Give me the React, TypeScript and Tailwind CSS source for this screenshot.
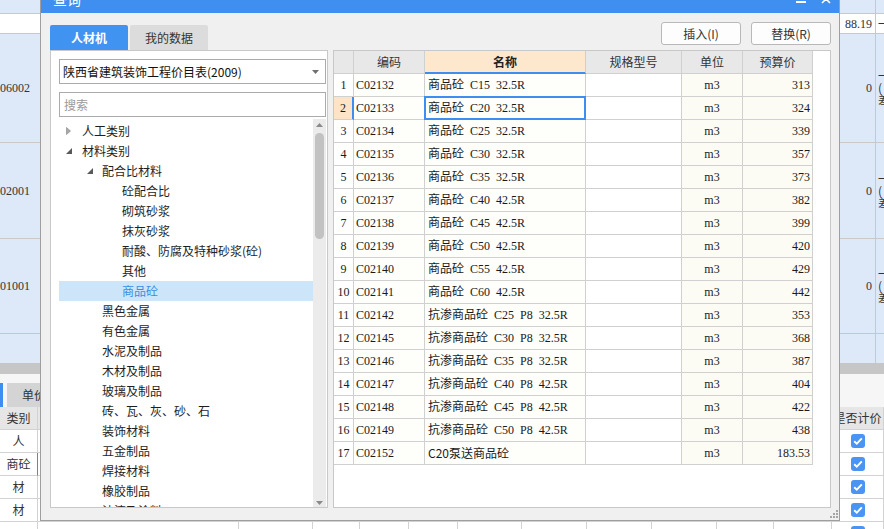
import React from "react";

const SANS = "font-[family-name:'Noto_Sans_CJK_SC','Noto_Sans',sans-serif]";
const SERIF = "font-[family-name:'Liberation_Serif','Noto_Sans_CJK_SC',serif]";

type Row = { n: number; code: string; name: string; price: string; sans?: boolean };

const rows: Row[] = [
  { n: 1, code: "C02132", name: "商品砼 C15 32.5R", price: "313" },
  { n: 2, code: "C02133", name: "商品砼 C20 32.5R", price: "324" },
  { n: 3, code: "C02134", name: "商品砼 C25 32.5R", price: "339" },
  { n: 4, code: "C02135", name: "商品砼 C30 32.5R", price: "357" },
  { n: 5, code: "C02136", name: "商品砼 C35 32.5R", price: "373" },
  { n: 6, code: "C02137", name: "商品砼 C40 42.5R", price: "382" },
  { n: 7, code: "C02138", name: "商品砼 C45 42.5R", price: "399" },
  { n: 8, code: "C02139", name: "商品砼 C50 42.5R", price: "420" },
  { n: 9, code: "C02140", name: "商品砼 C55 42.5R", price: "429" },
  { n: 10, code: "C02141", name: "商品砼 C60 42.5R", price: "442" },
  { n: 11, code: "C02142", name: "抗渗商品砼 C25 P8 32.5R", price: "353" },
  { n: 12, code: "C02145", name: "抗渗商品砼 C30 P8 32.5R", price: "368" },
  { n: 13, code: "C02146", name: "抗渗商品砼 C35 P8 32.5R", price: "387" },
  { n: 14, code: "C02147", name: "抗渗商品砼 C40 P8 42.5R", price: "404" },
  { n: 15, code: "C02148", name: "抗渗商品砼 C45 P8 42.5R", price: "422" },
  { n: 16, code: "C02149", name: "抗渗商品砼 C50 P8 42.5R", price: "438" },
  { n: 17, code: "C02152", name: "C20泵送商品砼", price: "183.53", sans: true },
];

type Item = { t: string; lvl: 0 | 1 | 2; tri?: "open" | "closed"; sel?: boolean };

const tree: Item[] = [
  { t: "人工类别", lvl: 0, tri: "closed" },
  { t: "材料类别", lvl: 0, tri: "open" },
  { t: "配合比材料", lvl: 1, tri: "open" },
  { t: "砼配合比", lvl: 2 },
  { t: "砌筑砂浆", lvl: 2 },
  { t: "抹灰砂浆", lvl: 2 },
  { t: "耐酸、防腐及特种砂浆(砼)", lvl: 2 },
  { t: "其他", lvl: 2 },
  { t: "商品砼", lvl: 2, sel: true },
  { t: "黑色金属", lvl: 1 },
  { t: "有色金属", lvl: 1 },
  { t: "水泥及制品", lvl: 1 },
  { t: "木材及制品", lvl: 1 },
  { t: "玻璃及制品", lvl: 1 },
  { t: "砖、瓦、灰、砂、石", lvl: 1 },
  { t: "装饰材料", lvl: 1 },
  { t: "五金制品", lvl: 1 },
  { t: "焊接材料", lvl: 1 },
  { t: "橡胶制品", lvl: 1 },
  { t: "油漆及涂料", lvl: 1 },
];

function Tri({ open }: { open: boolean }) {
  return open ? (
    <svg width="6" height="6" viewBox="0 0 6 6">
      <path d="M6 0 L6 6 L0 6 Z" fill="#595959" />
    </svg>
  ) : (
    <svg width="5" height="8" viewBox="0 0 5 8">
      <path d="M0.5 0.5 L4.5 4 L0.5 7.5 Z" fill="#a8a8a8" stroke="#8e8e8e" strokeWidth="0.7" />
    </svg>
  );
}

function Check() {
  return (
    <div className="w-[14px] h-[14px] rounded-[3px] bg-[#4a94f4] flex items-center justify-center">
      <svg width="10" height="8" viewBox="0 0 10 8">
        <path d="M1.2 4.2 L3.8 6.6 L8.8 1.4" fill="none" stroke="#ffffff" strokeWidth="1.9" />
      </svg>
    </div>
  );
}

const lowerCols = [38, 201, 74, 47, 49, 49, 64, 65, 65, 65, 57, 58, 52];

function LowerRow({ first, header, last, extra }: { first: string; header?: boolean; last?: React.ReactNode; extra?: boolean }) {
  return (
    <div className={`flex h-[23px] shrink-0 ${header ? "bg-[#e6e6e6]" : "bg-white"}`}>
      {lowerCols.map((w, i) => (
        <div
          key={i}
          style={{ width: w }}
          className={`shrink-0 h-full border-b border-r border-[#d2d2d2] flex items-center justify-center text-[12px] text-[#333] overflow-hidden whitespace-nowrap ${first === "商砼" && i === 0 ? "border-r-[#3d8ef0]" : ""}`}
        >
          {i === 0 ? first : i === 12 ? last : i === 10 && extra ? <div className="w-[13px] h-[10px] bg-[#9c9c9c] mt-[10px] ml-[10px]" /> : null}
        </div>
      ))}
    </div>
  );
}

function UpperRow({ h, bg, left, mid, right, lines, border = true }: { h: string; bg: string; left?: string; mid?: string; right?: string; lines?: string[]; border?: boolean }) {
  return (
    <div className={`flex shrink-0 ${h} ${bg} ${border ? "border-b border-[#c8c8c8]" : ""}`}>
      <div className={`w-[40px] shrink-0 flex items-center text-[12px] text-[#333] ${SERIF}`}>{left}</div>
      <div className="flex-1" />
      <div className={`w-[37px] shrink-0 border-r border-[#c8c8c8] flex items-center justify-end pr-[3px] text-[12px] text-[#333] ${SERIF}`}>{right}</div>
      <div className="w-[8px] shrink-0 flex flex-col justify-center pl-[2px] text-[12px] leading-[12px] text-[#333] overflow-hidden whitespace-nowrap">
        {mid ? <span>{mid}</span> : null}
        {lines ? lines.map((l, i) => <span key={i}>{l}</span>) : null}
      </div>
    </div>
  );
}

export default function App() {
  return (
    <div className={`relative w-[884px] h-[529px] overflow-hidden bg-white ${SANS}`}>
      {/* background spreadsheet */}
      <div className="flex flex-col w-[884px]">
        <UpperRow h="h-[14px]" bg="bg-[#dde8f9]" />
        <UpperRow h="h-[20px]" bg="bg-white" right="88.19" mid="一" />
        <UpperRow h="h-[109px]" bg="bg-[#dde8f9]" left="06002" right="0" lines={["一", "(", "差"]} />
        <UpperRow h="h-[96px]" bg="bg-[#dde8f9]" left="02001" right="0" lines={["一", "(", "差"]} />
        <UpperRow h="h-[95px]" bg="bg-[#dde8f9]" left="01001" right="0" lines={["一", "(", "差"]} />
        <UpperRow h="h-[29px]" bg="bg-[#dde8f9]" border={false} />
        <div className="h-[11px] shrink-0 bg-[#c6c6c6]" />
        <div className="h-[33px] shrink-0 bg-[#f6f6f6] flex items-end">
          <div className="w-[3px] h-[24px] bg-[#3d8ef0]" />
          <div className="ml-[4px] w-[70px] h-[24px] bg-[#d4d4d4] flex items-center pl-[15px] text-[12px] text-[#333]">单价</div>
        </div>
        <LowerRow first="类别" header last="是否计价" />
        <LowerRow first="人" last={<Check />} />
        <LowerRow first="商砼" last={<Check />} />
        <LowerRow first="材" last={<Check />} />
        <LowerRow first="材" last={<Check />} />
        <LowerRow first="" last={<Check />} extra />
      </div>

      {/* dialog */}
      <div className="absolute left-[40px] top-[-17px] w-[800px] h-[538px] border border-[#9e9e9e] bg-[#f0f0f0] flex flex-col overflow-hidden">
        <div className="h-[29px] shrink-0 bg-[#3f8ff0] flex items-center pl-[12px] pr-[8px]">
          <span className="text-[14px] text-white leading-none">查询</span>
          <div className="ml-auto flex items-center gap-[15px]">
            <svg width="10" height="10" viewBox="0 0 10 10">
              <rect x="0" y="7" width="10" height="2" fill="#ffffff" />
            </svg>
            <svg width="10" height="10" viewBox="0 0 10 10">
              <path d="M1 1 L9 9 M9 1 L1 9" stroke="#ffffff" strokeWidth="1.6" />
            </svg>
          </div>
        </div>

        <div className="flex-1 min-h-0 flex flex-col pt-[9px] pl-[9px] pr-[8px] pb-[12px] relative">
          {/* top row */}
          <div className="h-[28px] shrink-0 flex justify-between items-start">
            <div className="flex gap-[2px] mt-[3px]">
              <div className="w-[78px] h-[25px] rounded-t-[2px] bg-[#4193f2] flex items-center justify-center text-[12px] font-bold text-white">人材机</div>
              <div className="w-[78px] h-[25px] rounded-t-[2px] bg-[#dcdcdc] flex items-center justify-center text-[12px] text-[#333]">我的数据</div>
            </div>
            <div className="flex gap-[10px]">
              <div className="w-[80px] h-[23px] rounded-[3px] border border-[#b8b8b8] bg-[#fdfdfd] flex items-center justify-center text-[12px] text-[#333]">插入(I)</div>
              <div className="w-[80px] h-[23px] rounded-[3px] border border-[#b8b8b8] bg-[#fdfdfd] flex items-center justify-center text-[12px] text-[#333]">替换(R)</div>
            </div>
          </div>

          {/* main row */}
          <div className="flex-1 flex gap-[5px] min-h-0">
            {/* left panel */}
            <div className="w-[278px] shrink-0 border border-[#c8c8c8] bg-white flex flex-col min-h-0 overflow-hidden">
              <div className="pt-[8px] pl-[8px] pr-[1px] flex flex-col gap-[8px] shrink-0">
                <div className="h-[25px] border border-[#ababab] bg-white flex items-center pl-[3px] pr-[6px] text-[12px] text-[#111]">
                  <span>陕西省建筑装饰工程价目表(2009)</span>
                  <svg className="ml-auto" width="7" height="4" viewBox="0 0 7 4">
                    <path d="M0 0 L7 0 L3.5 4 Z" fill="#707070" />
                  </svg>
                </div>
                <div className="h-[25px] border border-[#ababab] bg-white flex items-center pl-[4px] text-[12px] text-[#9a9a9a]">搜索</div>
              </div>
              <div className="flex-1 min-h-0 mt-[2px] flex pl-[8px] pr-[1px]">
                <div className="flex-1 min-w-0 overflow-hidden pt-[2px]">
                  {tree.map((it, i) => (
                    <div
                      key={i}
                      className={`h-[20px] flex items-center text-[12px] whitespace-nowrap ${it.sel ? "bg-[#cde5f8] text-[#3a8de2]" : "text-[#1e1e1e]"}`}
                    >
                      <div
                        className={`shrink-0 flex items-center ${it.lvl === 0 ? "w-[23px] pl-[7px]" : it.lvl === 1 ? "w-[43px] pl-[28px]" : "w-[63px]"}`}
                      >
                        {it.tri ? <Tri open={it.tri === "open"} /> : null}
                      </div>
                      <span>{it.t}</span>
                    </div>
                  ))}
                </div>
                <div className="w-[13px] shrink-0 bg-[#ebebeb] flex flex-col">
                  <div className="h-[12px] flex items-center justify-center">
                    <svg width="7" height="4" viewBox="0 0 7 4">
                      <path d="M0 4 L7 4 L3.5 0 Z" fill="#8a8a8a" />
                    </svg>
                  </div>
                  <div className="mt-[2px] ml-[2px] w-[9px] h-[106px] rounded-full bg-[#c2c2c2]" />
                  <div className="mt-auto h-[12px] pb-[2px] flex items-end justify-center">
                    <svg width="7" height="4" viewBox="0 0 7 4">
                      <path d="M0 0 L7 0 L3.5 4 Z" fill="#8a8a8a" />
                    </svg>
                  </div>
                </div>
              </div>
            </div>

            {/* right panel */}
            <div className="flex-1 border border-[#c8c8c8] bg-white overflow-hidden">
              <div className="flex h-[23px] text-[12px] text-[#333]">
                <div className="w-[20px] shrink-0 border-r border-b border-[#d0d0d0] bg-[#e8e8e8]" />
                <div className="w-[71px] shrink-0 border-r border-b border-[#d0d0d0] bg-[#e8e8e8] flex items-center justify-center">编码</div>
                <div className="w-[161px] shrink-0 border-r border-[#d0d0d0] border-b-2 border-b-[#3d8ef0] bg-[#fde8cd] flex items-center justify-center font-bold text-[#222]">名称</div>
                <div className="w-[96px] shrink-0 border-r border-b border-[#d0d0d0] bg-[#e8e8e8] flex items-center justify-center">规格型号</div>
                <div className="w-[61px] shrink-0 border-r border-b border-[#d0d0d0] bg-[#e8e8e8] flex items-center justify-center">单位</div>
                <div className="w-[70px] shrink-0 border-r border-b border-[#d0d0d0] bg-[#e8e8e8] flex items-center justify-center">预算价</div>
              </div>
              {rows.map((r) => (
                <div key={r.n} className={`flex h-[23px] text-[12px] text-[#1a1a1a] ${SERIF}`}>
                  <div
                    className={`w-[20px] shrink-0 border-b border-[#d0d0d0] flex items-center justify-center ${r.n === 2 ? "bg-[#fde4c6] border-r-2 border-r-[#3d8ef0]" : "bg-white border-r"}`}
                  >
                    {r.n}
                  </div>
                  <div className="w-[71px] shrink-0 border-r border-b border-[#d0d0d0] bg-[#fefefb] flex items-center pl-[2px]">{r.code}</div>
                  <div className="w-[161px] shrink-0 border-r border-b border-[#d0d0d0] bg-[#fefefb] flex items-center pl-[3px] relative">
                    <span className={`whitespace-pre [word-spacing:3px] ${r.sans ? SANS : ""}`}>{r.name}</span>
                    {r.n === 2 ? <div className="absolute left-[-1px] top-[-1px] right-[-1px] bottom-[-1px] border-2 border-[#3d8ef0]" /> : null}
                  </div>
                  <div className="w-[96px] shrink-0 border-r border-b border-[#d0d0d0] bg-white" />
                  <div className="w-[61px] shrink-0 border-r border-b border-[#d0d0d0] bg-[#fcfcf5] flex items-center justify-center">m3</div>
                  <div className="w-[70px] shrink-0 border-r border-b border-[#d0d0d0] bg-[#fcfcf5] flex items-center justify-end pr-[2px]">{r.price}</div>
                </div>
              ))}
            </div>
          </div>

          {/* resize grip */}
          <svg className="absolute right-[1px] bottom-[2px]" width="9" height="9" viewBox="0 0 9 9">
            <rect x="7" y="1" width="2" height="2" fill="#a6a6a6" />
            <rect x="4" y="4" width="2" height="2" fill="#a6a6a6" />
            <rect x="7" y="4" width="2" height="2" fill="#a6a6a6" />
            <rect x="1" y="7" width="2" height="2" fill="#a6a6a6" />
            <rect x="4" y="7" width="2" height="2" fill="#a6a6a6" />
            <rect x="7" y="7" width="2" height="2" fill="#a6a6a6" />
          </svg>
        </div>
      </div>
    </div>
  );
}
